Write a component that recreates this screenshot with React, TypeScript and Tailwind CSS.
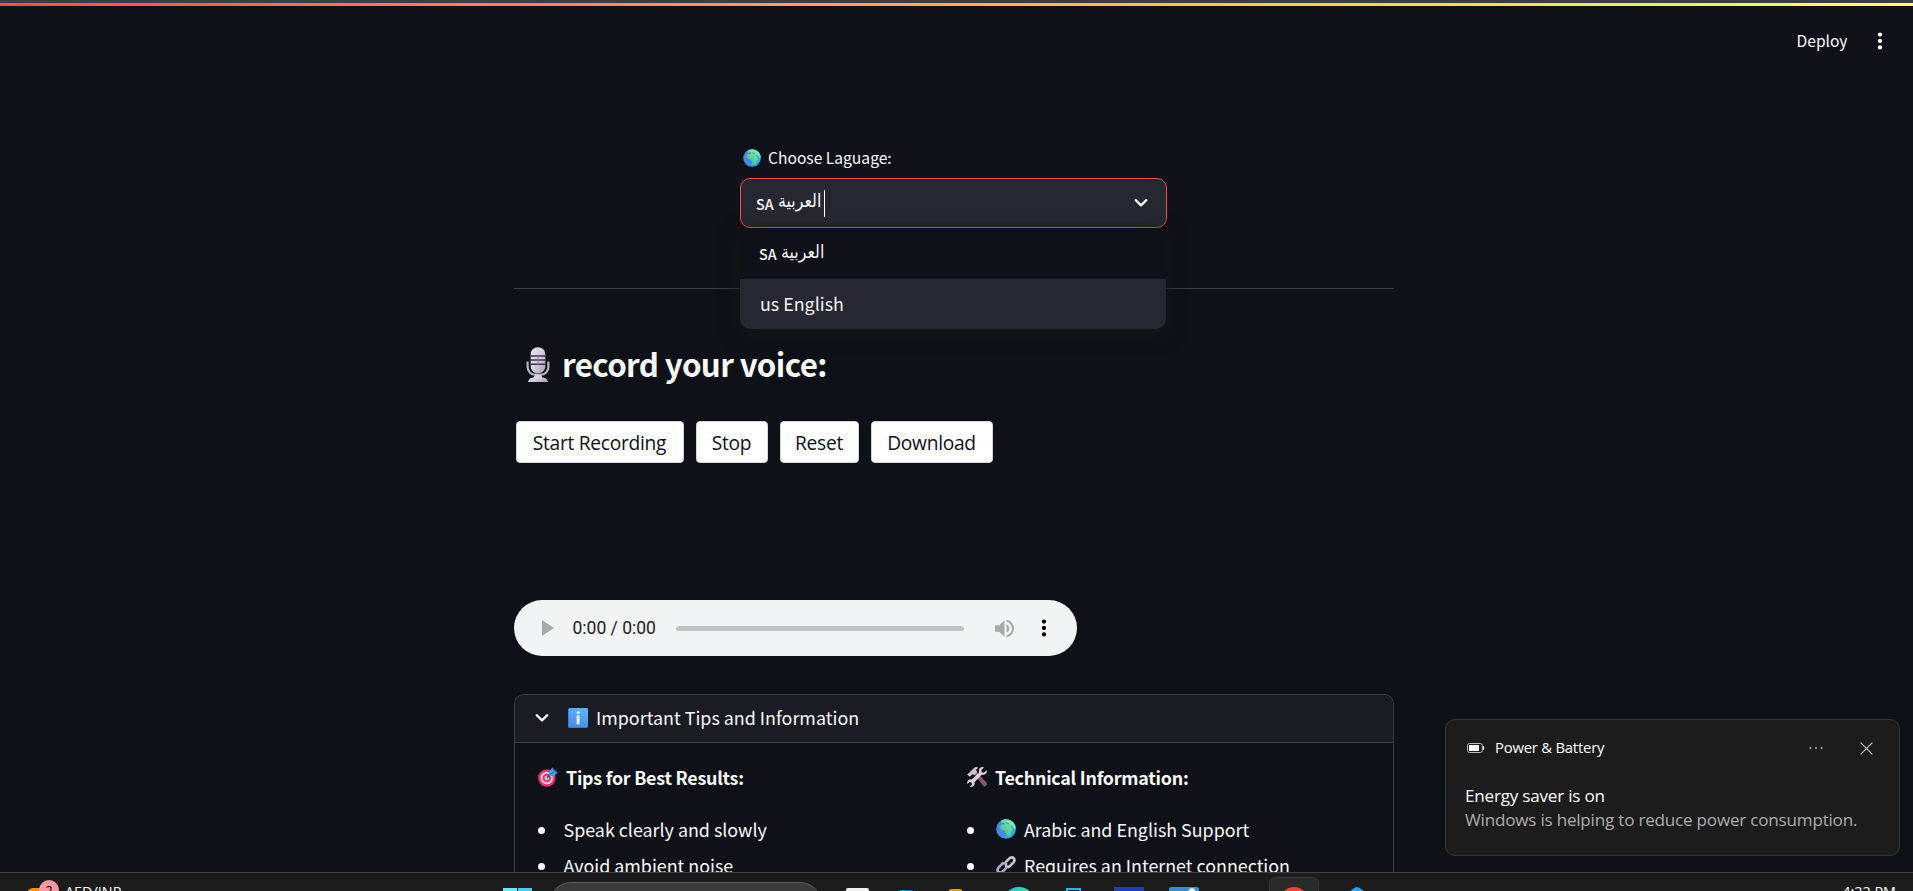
import type { ReactNode } from "react";

const sans = "font-['Noto_Sans_CJK_SC',sans-serif]";
const system = "font-['Open_Sans',sans-serif]";

function Globe({ className }: { className: string }) {
  return (
    <svg viewBox="0 0 20 20" className={className}>
      <defs>
        <linearGradient id="sea" x1="0" y1="0.3" x2="1" y2="0.7">
          <stop offset="0" stopColor="#4a83d8" />
          <stop offset="0.55" stopColor="#3f8ff0" />
          <stop offset="1" stopColor="#25b4ff" />
        </linearGradient>
        <linearGradient id="land" x1="0.2" y1="0.9" x2="0.9" y2="0">
          <stop offset="0" stopColor="#4fb38c" />
          <stop offset="1" stopColor="#7dffb4" />
        </linearGradient>
      </defs>
      <circle cx="10" cy="10" r="9.8" fill="url(#sea)" />
      <path
        d="M5.2 1.6C8.5-.4 13.500-.2 16.600 2.800 18.600 4.600 19.700 7 19.800 9.200L18 10.200 16.600 7.200 14 6.400 16.200 9.700 16.800 10.800 15.200 13.200 14.600 16 12.200 18.200 10.600 17.600 9.800 14.400 8.600 11.600 5 10.800 3.600 8.300 5.300 5.800 9 5.200 8 3.600 5.200 4.200Z"
        fill="url(#land)"
      />
      <path d="M9.400 3.700l2.700.4 1.700 1.300-2.400-.2z" fill="#3f8ff0" />
    </svg>
  );
}

function Microphone({ className }: { className: string }) {
  return (
    <svg viewBox="0 0 24 36" className={className}>
      <defs>
        <linearGradient id="mic" x1="0" y1="0" x2="1" y2="1">
          <stop offset="0" stopColor="#e6e2ea" />
          <stop offset="0.5" stopColor="#d6cfdd" />
          <stop offset="1" stopColor="#a99bb5" />
        </linearGradient>
      </defs>
      <path d="M12 .3c4.200 0 7.300 2.900 7.300 7v12c0 4.200-3 7-7.300 7s-7.300-2.800-7.300-7v-12c0-4.100 3.100-7 7.300-7z" fill="url(#mic)" />
      <path d="M4.700 9h14.600M4.700 13h14.600M4.700 17.200h14.600" stroke="#3d2f50" strokeWidth="1.500" />
      <path d="M12 7.500v10.500" stroke="#8d809c" strokeWidth=".9" />
      <path d="M1.600 14.500v5.300c0 4.600 3.300 7.800 7.600 7.800h5.600c4.300 0 7.600-3.200 7.600-7.800v-5.300" fill="none" stroke="#b9b0c2" strokeWidth="2.200" />
      <path d="M9 28h6l1.200 2.300 4 1.200 2 3.500H1.800l2-3.500 4-1.200z" fill="url(#mic)" />
    </svg>
  );
}

function Target() {
  return (
    <svg viewBox="0 0 20 20" className="h-5 w-5 shrink-0">
      <circle cx="8.800" cy="11" r="8.700" fill="#e6356c" />
      <circle cx="8.800" cy="11" r="6.300" fill="#dcc6dc" />
      <circle cx="8.800" cy="11" r="4.300" fill="#e6356c" />
      <circle cx="8.800" cy="11" r="2.300" fill="#dcc6dc" />
      <path d="M8.800 11l4-4" stroke="#37495f" strokeWidth="1.300" />
      <path d="M11.200 8.600l-.3-4L14.700.3l.8 2.600 1.600-.7.4 2.300 2.400.6-3.900 3.900z" fill="#3f9fe8" />
      <path d="M12.400 7.600l4.800-4.700" stroke="#2468b8" strokeWidth="1" />
    </svg>
  );
}

function Tools() {
  return (
    <svg viewBox="0 0 20 20" className="h-5 w-5 shrink-0">
      <path d="M7.600 7.200l1.900-1.900 10 10.300c.8.900.6 2.400-.4 3.200s-2.200.8-3 0z" fill="#8b5668" />
      <path d="M.2 7.800L7 .9c1.500-1 3-1 4.300-.2L8.900 3.100l1.500 2.100-3.200 3-1.900-.9-2.300 2.500z" fill="#cdc3d6" />
      <path
        d="M19.700 3.300l-2.900 2.500-2-.6-.5-2L17 .3c-2-.6-4.100.2-4.800 2-.4 1-.4 2 0 2.900L4.700 12.400c-1.800-.5-3.600.3-4.300 2-.4 1-.3 1.900 0 2.700l2.200-2 1.900.5.500 1.900-2.400 2.200c1.900.6 3.800 0 4.700-1.600.5-1 .5-2 .2-2.900l7.300-7.400c1.900.3 4-.3 4.700-2 .4-.9.500-1.700.2-2.500z"
        fill="#d9d0e0"
      />
    </svg>
  );
}

function Link() {
  return (
    <svg viewBox="0 0 20 20" className="h-5 w-5 shrink-0" fill="none" strokeWidth="2.700" strokeLinecap="round">
      <path d="M9.600 13.600l-3 3c-1.300 1.300-3.200 1.300-4.300.2s-1-3 .2-4.200l3.400-3.500c1.200-1.200 3-1.200 4.100-.1" stroke="#b7a6c4" />
      <path d="M10.400 6.400l3-3c1.300-1.300 3.200-1.300 4.300-.2s1 3-.2 4.200l-3.400 3.500c-1.200 1.200-3 1.200-4.100.1" stroke="#cdc2d4" />
    </svg>
  );
}

function InfoBadge() {
  return (
    <svg viewBox="0 0 20 20" className="h-5 w-5 shrink-0">
      <defs>
        <linearGradient id="info" x1="0" y1="1" x2="0.3" y2="0">
          <stop offset="0" stopColor="#4389e4" />
          <stop offset="1" stopColor="#5cb0ff" />
        </linearGradient>
      </defs>
      <rect width="20" height="20" rx="1.500" fill="#3f77cf" />
      <rect x=".8" width="19.200" height="19" rx="1.200" fill="url(#info)" />
      <rect x="8.700" y="7.200" width="2.800" height="9.300" rx=".6" fill="#eef" />
      <circle cx="10.100" cy="4.600" r="1.500" fill="#eef" />
    </svg>
  );
}

function Chevron({ className }: { className: string }) {
  return (
    <svg viewBox="0 0 14 10" className={className} fill="none" stroke="currentColor" strokeWidth="2.200">
      <path d="M1.700 2.100L7 7.400l5.300-5.300" strokeLinejoin="round" strokeLinecap="round" />
    </svg>
  );
}

function Dots({ className }: { className: string }) {
  return (
    <svg viewBox="0 0 6 18" className={className} fill="currentColor">
      <circle cx="3" cy="2.600" r="2.150" />
      <circle cx="3" cy="9" r="2.150" />
      <circle cx="3" cy="15.400" r="2.150" />
    </svg>
  );
}

function SaudiArabic() {
  return (
    <span className="flex items-center">
      <span className="mt-px mr-[4px] text-[14.300px] font-medium leading-8">SA</span>
      <span className="-mt-[5px] w-[43px] origin-left scale-x-[0.88] whitespace-nowrap font-['DejaVu_Sans',sans-serif] text-[18px]" lang="ar">
        العربية
      </span>
    </span>
  );
}

function RecordButton({ className, children }: { className: string; children: ReactNode }) {
  return (
    <button className={`${system} flex h-[42px] items-center justify-center rounded-[4px] border border-[#d5d6d8] bg-white pt-px pr-px text-[19.200px] leading-none tracking-[-0.280px] text-[#0e1117] ${className}`}>
      {children}
    </button>
  );
}

function Bullet({ children }: { children: ReactNode }) {
  return (
    <li className="flex h-8 items-center leading-8">
      <span className="mt-[3px] mr-[18.500px] h-[7px] w-[7px] shrink-0 rounded-full bg-[#fafafa]" />
      {children}
    </li>
  );
}

function LanguageSelect() {
  return (
    <div className="relative ml-[226px] w-[427px]">
      <label className="flex h-6 items-center text-[15.620px] leading-6">
        <Globe className="mt-px mr-[7px] ml-[3px] h-[18px] w-[18px]" />
        Choose Laguage:
      </label>
      <div className="mt-[9px] flex h-[50px] items-center justify-between rounded-[10px] border border-[#ff4b4b] bg-[#262730] pr-[18px] pl-[15px]">
        <div className="flex items-center">
          <SaudiArabic />
          <span className="ml-[3px] h-[27px] w-px bg-white" />
        </div>
        <Chevron className="h-[10px] w-[14px]" />
      </div>
      <ul className="absolute top-[84px] left-0 w-[426px] overflow-hidden rounded-b-[10px] bg-[#0e1117] text-[#f4f4f5] shadow-[0_5px_20px_rgba(22,22,22,0.9)]">
        <li className="flex h-[50px] items-center pb-px pl-[19px]">
          <SaudiArabic />
        </li>
        <li className="flex h-[50px] items-center bg-[#262730] pb-[3px] pl-5 text-[17.860px] leading-8">us English</li>
      </ul>
    </div>
  );
}

function AudioPlayer() {
  return (
    <div className="mt-[137px] flex h-14 w-[563px] items-center rounded-full bg-[#f1f3f4] pl-7">
      <svg viewBox="0 0 12 16" className="h-4 w-3" fill="#a9abab">
        <path d="M0 0l12 8-12 8z" />
      </svg>
      <span className="mt-[2px] ml-[18.500px] w-[84px] whitespace-nowrap font-['Roboto',sans-serif] text-[17.500px] leading-none text-[#202124]">0:00 / 0:00</span>
      <span className="ml-[19.500px] h-[5px] w-[288px] rounded-full bg-[#c1c3c4]" />
      <svg viewBox="0 0 19 19" className="ml-[31px] h-[19px] w-[19px]" fill="#a9abab">
        <path d="M0 6.300v6.400h4.200l5.300 5.300V1L4.200 6.300zM14.300 9.500c0-1.900-1.100-3.500-2.700-4.300v8.600c1.600-.8 2.700-2.400 2.700-4.300zM11.600.6v2.200c3.100.9 5.300 3.600 5.300 6.700s-2.200 5.800-5.300 6.700v2.200c4.200-1 7.400-4.500 7.400-8.900S15.800 1.600 11.600.6z" />
      </svg>
      <Dots className="ml-[27px] h-[18px] w-[6px] text-black" />
    </div>
  );
}

function TipsPanel() {
  return (
    <section className="mt-[38px] w-[880px] rounded-t-[10px] border border-b-0 border-[#3d3f44] text-[17.860px]">
      <header className="flex h-12 items-center rounded-t-[9px] border-b border-[#3d3f44] bg-[#1a1c24] pb-px pl-5">
        <Chevron className="h-[10px] w-[14px]" />
        <div className="ml-[18.500px] flex items-center gap-[8.500px] leading-8">
          <InfoBadge />
          <span className="-mt-[3px] tracking-[0.010px]">Important Tips and Information</span>
        </div>
      </header>
      <div className="grid grid-cols-[429px_1fr] pt-[18px] pl-[23px]">
        <div>
          <h3 className="flex h-8 items-center gap-2 font-bold leading-8 tracking-[-0.240px]">
            <Target />
            Tips for Best Results:
          </h3>
          <ul className="mt-5 flex flex-col gap-1">
            <Bullet>Speak clearly and slowly</Bullet>
            <Bullet>Avoid ambient noise</Bullet>
          </ul>
        </div>
        <div>
          <h3 className="flex h-8 items-center gap-2 font-bold leading-8 tracking-[-0.240px]">
            <Tools />
            Technical Information:
          </h3>
          <ul className="mt-5 flex flex-col gap-1">
            <Bullet>
              <span className="ml-[3.500px] flex items-center gap-2">
                <Globe className="h-5 w-5" />
                Arabic and English Support
              </span>
            </Bullet>
            <Bullet>
              <span className="ml-[3.500px] flex items-center gap-2">
                <Link />
                Requires an Internet connection
              </span>
            </Bullet>
          </ul>
        </div>
      </div>
    </section>
  );
}

function Toast() {
  return (
    <aside className={`${system} absolute top-[719px] left-[1445px] h-[137px] w-[455px] rounded-[10px] border border-[#363636] bg-[#1c1c1c] pt-4 pr-5 pl-[19px] text-white`}>
      <div className="flex h-6 items-center">
        <svg viewBox="0 0 18 10" className="ml-[2px] h-[10px] w-[18px]">
          <rect x=".5" y=".5" width="14.800" height="9" rx="2" fill="none" stroke="#bdbdbd" />
          <rect x="2" y="2" width="10" height="6" rx=".5" fill="#fff" />
          <path d="M16.500 3.200v3.600" stroke="#fff" strokeWidth="1.200" />
        </svg>
        <span className="-mt-[2px] ml-[10px] text-[14.800px] leading-6 tracking-[-0.200px]">Power &amp; Battery</span>
        <svg viewBox="0 0 14 4" className="ml-auto h-1 w-[14px]" fill="#b5b5b5">
          <circle cx="1.500" cy="2" r="1" />
          <circle cx="7" cy="2" r="1" />
          <circle cx="12.500" cy="2" r="1" />
        </svg>
        <svg viewBox="0 0 13 13" className="mr-[6px] ml-[37px] h-[13px] w-[13px]" stroke="#c0c0c0" strokeWidth="1.200">
          <path d="M.6.6l11.800 11.800M12.400.6L.6 12.400" />
        </svg>
      </div>
      <p className="mt-6 text-[17.100px] leading-6 tracking-[-0.220px]">Energy saver is on</p>
      <p className="text-[17.100px] leading-6 tracking-[-0.220px] text-[#adadad]">Windows is helping to reduce power consumption.</p>
    </aside>
  );
}

function Taskbar() {
  return (
    <footer className={`${system} flex h-[19px] shrink-0 items-start overflow-hidden border-t border-[#434343] bg-[#1c1c1c] text-[14.400px] leading-5 text-white`}>
      <div className="relative mt-[7px] ml-[27px] h-6 w-8">
        <span className="absolute top-2 left-0 block h-4 w-8 rounded-t-[6px] bg-[#f7920f]" />
        <span className="absolute top-0 left-3 flex h-5 w-5 items-center justify-center rounded-full bg-[#ff99a4] text-[13px] text-black">2</span>
      </div>
      <span className="mt-[9px] ml-[6px] w-[71px]">AED/INR</span>
      <span className="mt-[15px] ml-[367px] h-4 w-[14px] bg-[#6fe6f8]" />
      <span className="mt-[15px] ml-px h-4 w-[14px] bg-[#4fc8f2]" />
      <span className="mt-[9px] ml-[17px] h-11 w-[273px] rounded-full border border-[#5c5c5c] bg-[#3b3b3b]" />
      <span className="mt-[15px] ml-[24px] h-4 w-[23px] rounded-t-[2px] bg-[#f1f1f1]" />
      <span className="mt-[17px] ml-[30px] h-4 w-[15px] rounded-t-[3px] bg-gradient-to-r from-[#1fb3f0] to-[#1a3fd0]" />
      <span className="mt-[16px] ml-[35px] h-4 w-[13px] rounded-t-[2px] bg-[#dba109]" />
      <span className="mt-[14px] ml-[41px] h-8 w-8 rounded-full bg-gradient-to-r from-[#25b3e6] to-[#4ddf8c]" />
      <span className="mt-[15px] ml-[31px] h-4 w-[15px] border-2 border-[#27b6ec] bg-[#15232b]" />
      <span className="mt-[14px] ml-[33px] h-4 w-[30px] bg-[#1f3fb2]" />
      <svg viewBox="0 0 30 4" className="mt-[14px] ml-[25px] h-1 w-[30px]">
        <path d="M0 4V2C0 1 1 0 2 0h26c1 0 2 1 2 2v2z" fill="#3c8ccf" />
        <circle cx="23" cy="4.500" r="3.200" fill="#fff" />
      </svg>
      <span className="mt-[17px] ml-[31px] h-4 w-[15px] bg-[#2c1517]" />
      <span className="mt-1 ml-[24px] flex h-12 w-[50px] justify-center rounded-[6px] border border-[#363636] bg-[#292929] pt-[9px]">
        <span className="h-7 w-7 rounded-full bg-[#ea4335]" />
      </span>
      <svg viewBox="0 0 14 4" className="mt-[14px] ml-[31px] h-1 w-[14px]">
        <path d="M0 4l6-4 3 .6L14 4z" fill="#23a3ea" />
      </svg>
      <span className="mt-[9px] mr-[17px] ml-auto">4:22 PM</span>
    </footer>
  );
}

export default function App() {
  return (
    <div className={`${sans} relative flex h-[891px] w-[1913px] flex-col overflow-hidden bg-[#0e1117] text-[#fafafa]`}>
      <div className="h-[3px] shrink-0 bg-[#3b3c44]" />
      <div className="h-[3px] shrink-0 bg-gradient-to-r from-[#ff4b4b] to-[#fffd80]" />
      <div className="flex h-[68px] shrink-0 items-center justify-end pr-[30px] text-[15.600px] leading-6">
        <span className="mr-[29.500px]">Deploy</span>
        <Dots className="mt-px h-[18px] w-[6px]" />
      </div>
      <main className="ml-[514px] min-h-0 w-[880px] flex-1 overflow-hidden pt-[71px]">
        <LanguageSelect />
        <hr className="mt-[60px] border-[#3d3f44]" />
        <h2 className="mt-[54px] flex h-[42px] items-center pl-[12px] text-[31.300px] font-bold leading-[42px] tracking-[-0.620px]">
          <Microphone className="mt-[2px] mr-[12px] h-9 w-6" />
          record your voice:
        </h2>
        <div className="mt-[36px] ml-[2px] flex gap-3">
          <RecordButton className="w-[168px]">Start Recording</RecordButton>
          <RecordButton className="w-[72px]">Stop</RecordButton>
          <RecordButton className="w-[79px]">Reset</RecordButton>
          <RecordButton className="w-[122px]">Download</RecordButton>
        </div>
        <AudioPlayer />
        <TipsPanel />
      </main>
      <Taskbar />
      <Toast />
    </div>
  );
}
